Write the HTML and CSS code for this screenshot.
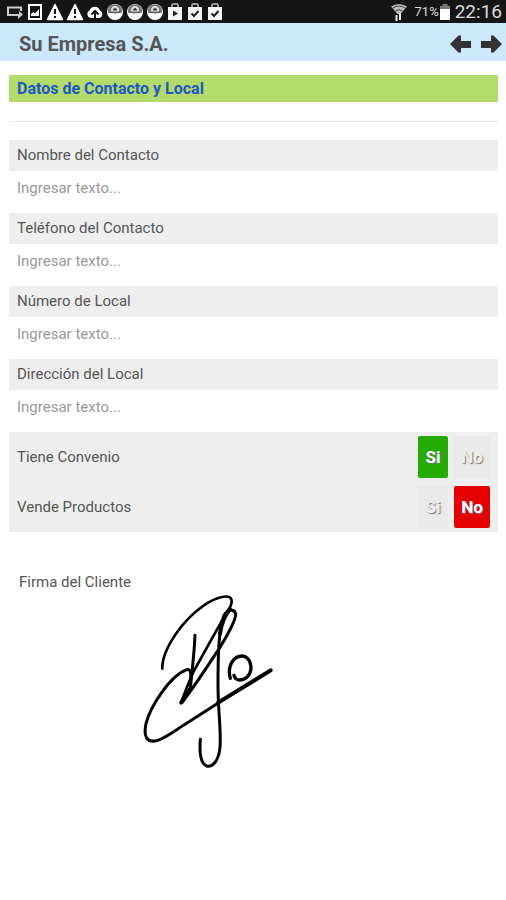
FILE: index.html
```html
<!DOCTYPE html>
<html lang="es">
<head>
  <meta charset="UTF-8" />
  <meta name="viewport" content="width=device-width, initial-scale=1.0"/>
  <title>Su Empresa S.A.</title>
  <link rel="stylesheet" href="styles.css">
</head>
<body>

  <!-- shared status icons -->
  <svg width="0" height="0" class="sprite">
    <symbol id="warning" viewBox="0 0 18 18">
      <path d="M9 1.500L16.500 16.500H1.500Z" fill="#fff" stroke="#fff" stroke-width="1.500" stroke-linejoin="round"/>
      <path d="M9 6V11M9 13V15" stroke="#151515" stroke-width="2"/>
    </symbol>
    <symbol id="ball" viewBox="0 0 18 18">
      <circle cx="9" cy="9" r="8" fill="#fff"/>
      <path d="M2 8.500Q1.500 3 7 1.500H11Q16.500 3 16 8.500Q9 10.500 2 8.500Z" fill="#777"/>
      <path d="M5 8.500Q4.500 3 9 3Q13.500 3 13 8.500Z" fill="#ddd"/>
      <path d="M7 7.500Q7 5 9 5Q11 5 11 7.500Z" fill="#333"/>
      <path d="M2 9Q9 11 16 9" fill="none" stroke="#444" stroke-width="1"/>
    </symbol>
    <symbol id="bag" viewBox="0 0 18 18">
      <path d="M2 4H16V17H2Z" fill="#f4f4f4"/>
      <path d="M6 4V2Q6 1 7 1H11Q12 1 12 2V4" fill="none" stroke="#bbb" stroke-width="1.500"/>
    </symbol>
  </svg>

  <div class="status-bar">
    <div class="status-left">
      <svg viewBox="0 0 18 18"><path d="M15 8V4.500H2V12H10" fill="none" stroke="#ccc" stroke-width="2"/><path d="M9 11H13V8L17 11.500L12 16V13H9Z" fill="#ccc"/></svg>
      <svg viewBox="0 0 18 18"><path d="M3 2H15V16H3Z" fill="none" stroke="#fff" stroke-width="2"/><path d="M5 13V11L7.500 9L9 10.500L13 6V13Z" fill="#fff"/></svg>
      <svg><use href="#warning"/></svg>
      <svg><use href="#warning"/></svg>
      <svg viewBox="0 0 18 18"><path d="M4.500 15A4 4 0 0 1 3.500 7.500A5.500 5.500 0 0 1 14 7.500A4 4 0 0 1 13.500 15Z" fill="#fff"/><path d="M9 17V9M5.500 11.500L9 8L12.500 11.500" fill="none" stroke="#151515" stroke-width="2"/></svg>
      <svg><use href="#ball"/></svg>
      <svg><use href="#ball"/></svg>
      <svg><use href="#ball"/></svg>
      <svg viewBox="0 0 18 18"><use href="#bag"/><path d="M7 7.500L12 10.500L7 13.500Z" fill="#222"/></svg>
      <svg viewBox="0 0 18 18"><use href="#bag"/><path d="M5.500 10.500L8 13L12.500 8" fill="none" stroke="#222" stroke-width="2"/></svg>
      <svg viewBox="0 0 18 18"><use href="#bag"/><path d="M5.500 10.500L8 13L12.500 8" fill="none" stroke="#222" stroke-width="2"/></svg>
    </div>
    <div class="status-right">
      <svg class="wifi" viewBox="0 0 16 18"><path d="M0 3.500Q8-1.500 16 3.500L9.500 11H6.500Z" fill="#bbb"/><path d="M2 5Q8 1 14 5M4.500 8Q8 5.500 11.500 8" fill="none" stroke="#444" stroke-width="1"/><path d="M5.500 12V18M9 10V17" stroke="#eee" stroke-width="2"/></svg>
      <span class="percent">71%</span>
      <svg class="battery" viewBox="0 0 12 18"><path d="M3.500 1H8.500V3H11V6H1V3H3.500Z" fill="#777"/><path d="M1 6H11V17H1Z" fill="#fff"/></svg>
      <span class="clock">22:16</span>
    </div>
  </div>

  <header>
    <h1>Su Empresa S.A.</h1>
    <div class="nav">
      <button type="button" aria-label="Anterior"><svg viewBox="0 0 22 20"><path d="M0 10L9 1L11 2V7H21V14H11V18L9 19Z" fill="#333"/></svg></button>
      <button type="button" aria-label="Siguiente"><svg viewBox="0 0 22 20"><path d="M22 10L13 1L11 2V7H1V14H11V18L13 19Z" fill="#333"/></svg></button>
    </div>
  </header>

  <form class="container">
    <h2>Datos de Contacto y Local</h2>
    <hr>

    <div class="field">
      <label for="nombre">Nombre del Contacto</label>
      <input type="text" id="nombre" placeholder="Ingresar texto...">
    </div>
    <div class="field">
      <label for="telefono">Teléfono del Contacto</label>
      <input type="tel" id="telefono" placeholder="Ingresar texto...">
    </div>
    <div class="field">
      <label for="numero">Número de Local</label>
      <input type="text" id="numero" placeholder="Ingresar texto...">
    </div>
    <div class="field">
      <label for="direccion">Dirección del Local</label>
      <input type="text" id="direccion" placeholder="Ingresar texto...">
    </div>

    <div class="options">
      <div class="option" role="radiogroup" aria-labelledby="convenio">
        <span class="option-name" id="convenio">Tiene Convenio</span>
        <label class="choice yes"><input type="radio" name="convenio" checked><span>Si</span></label>
        <label class="choice no"><input type="radio" name="convenio"><span>No</span></label>
      </div>
      <div class="option" role="radiogroup" aria-labelledby="productos">
        <span class="option-name" id="productos">Vende Productos</span>
        <label class="choice yes"><input type="radio" name="productos"><span>Si</span></label>
        <label class="choice no"><input type="radio" name="productos" checked><span>No</span></label>
      </div>
    </div>

    <div class="signature">
      <h3>Firma del Cliente</h3>
      <svg viewBox="0 60 480 540" fill="none" stroke="#000" stroke-linecap="round" stroke-linejoin="round">
        <path stroke-width="8" d="M97 290C96 262 112 222 140 182C175 134 225 90 265 78C290 70 306 72 305 90C304 101 300 108 292 118C255 182 215 255 190 300C176 330 165 360 153 393"/>
        <path stroke-width="9" d="M195 190C193 240 186 300 180 358L153 393C185 358 230 285 270 226C295 185 318 145 317 126C315 110 293 110 282 130C268 170 264 220 264 340C264 420 274 475 270 525C267 566 247 587 230 582C212 575 208 540 211 502"/>
        <path stroke-width="9" d="M181 335C184 305 183 290 171 293C120 310 60 405 48 455C40 492 49 515 83 505C110 496 137 474 170 454L266 392L422 295"/>
        <path stroke-width="13" d="M155 390L182 350"/>
        <path stroke-width="12" d="M264 392L422 295M270 185C275 150 285 128 300 112"/>
        <path stroke-width="10" d="M301 319C292 290 304 262 325 254C350 246 363 265 363 290C361 311 346 324 328 324C317 323 314 317 312 310"/>
      </svg>
    </div>
  </form>

</body>
</html>
```
FILE: styles.css
```css
* {
  box-sizing: border-box;
}

body {
  font-family: Roboto, sans-serif;
  margin: 0;
  background: #fff;
  color: #555;
  font-size: 15px;
}

h1, h2, h3 {
  margin: 0;
}

.sprite {
  position: absolute;
}

.status-bar {
  display: flex;
  justify-content: space-between;
  align-items: center;
  height: 23px;
  padding: 0 4px 0 6px;
  background: #151515;
  color: #ddd;
}

.status-left {
  display: flex;
  gap: 2px;
}

.status-left svg {
  width: 18px;
  height: 18px;
}

.status-right {
  display: flex;
  align-items: center;
}

.wifi {
  width: 16px;
  height: 18px;
  margin-right: 8px;
}

.percent {
  font-size: 13px;
}

.battery {
  width: 12px;
  height: 18px;
  margin-right: 4px;
}

.clock {
  font-size: 19px;
}

header {
  display: flex;
  justify-content: space-between;
  align-items: center;
  height: 38px;
  padding: 4px 4px 0 19px;
  background: #cbe9fa;
}

h1 {
  font-size: 20px;
  line-height: 24px;
  font-weight: 700;
}

.nav {
  display: flex;
  gap: 8px;
}

.nav button {
  padding: 0;
  border: none;
  background: none;
  cursor: pointer;
}

.nav svg {
  display: block;
  width: 22px;
  height: 20px;
}

.container {
  padding: 14px 8px 0 9px;
}

h2 {
  padding: 0 8px;
  font-size: 16px;
  line-height: 27px;
  font-weight: 700;
  color: #1d57c4;
  background: #b2db6c;
}

hr {
  margin: 19px 0 18px;
  border: none;
  border-top: 1px solid #e6e6e6;
}

.field label {
  display: block;
  padding: 0 8px;
  line-height: 31px;
  background: #eee;
}

.field input {
  display: block;
  width: 100%;
  height: 34px;
  margin-bottom: 8px;
  padding: 0 8px;
  border: none;
  outline: none;
  background: #fff;
  font: inherit;
}

.field input::placeholder {
  color: #999;
}

.options {
  padding: 0 8px;
  background: #eee;
}

.option {
  display: flex;
  align-items: center;
  gap: 6px;
  height: 50px;
}

.option-name {
  flex: 1;
}

.choice {
  position: relative;
  cursor: pointer;
}

.choice input {
  position: absolute;
  inset: 0;
  margin: 0;
  opacity: 0;
}

.choice span {
  display: block;
  width: 30px;
  border-radius: 2px;
  line-height: 42px;
  font-size: 17px;
  font-weight: 700;
  text-align: center;
  color: #eee;
  background: #e9e9e9;
  text-shadow: 1px 1px 1px #777;
}

.choice.no span {
  width: 36px;
}

.choice input:checked + span {
  color: #fff;
}

.yes input:checked + span {
  background: #24ab06;
}

.no input:checked + span {
  background: #e20000;
}

.signature {
  padding: 40px 10px;
}

h3 {
  font-size: 15px;
  line-height: 20px;
  font-weight: 400;
}

.signature svg {
  display: block;
  width: 160px;
  height: 180px;
  margin-left: 111px;
}
```
